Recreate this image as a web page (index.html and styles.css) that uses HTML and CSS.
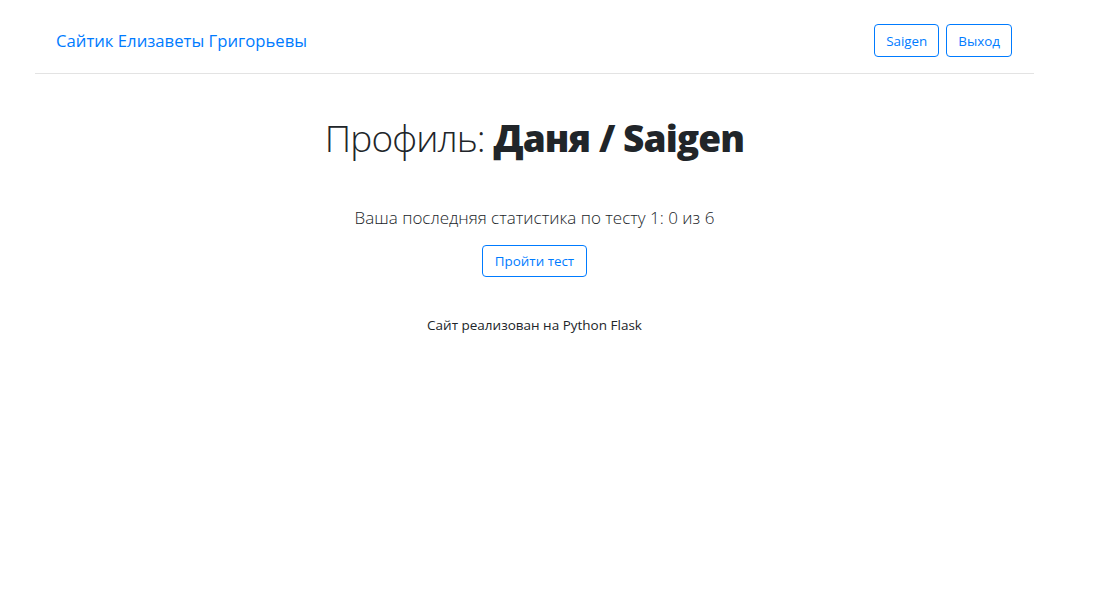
FILE: index.html
```html
<!DOCTYPE html>
<html lang="ru">
<head>
<meta charset="utf-8">
<title>Профиль</title>
<link rel="stylesheet" href="styles.css">
</head>
<body>
<div class="page">
  <div class="container">
    <header class="navbar">
      <a class="brand" href="#">Сайтик Елизаветы Григорьевы</a>
      <nav class="nav-buttons">
        <a class="btn" href="#">Saigen</a>
        <a class="btn" href="#">Выход</a>
      </nav>
    </header>
    <main class="content">
      <h1 class="title">Профиль: <b>Даня / Saigen</b></h1>
      <p class="stats">Ваша последняя статистика по тесту 1: 0 из 6</p>
      <a class="btn btn-wide" href="#">Пройти тест</a>
      <footer class="footer">Сайт реализован на Python Flask</footer>
    </main>
  </div>
</div>
</body>
</html>
```
FILE: styles.css
```css
* { box-sizing: border-box; }
html, body { margin: 0; background: #fff; }
body {
  font-family: "Open Sans", "Noto Sans", sans-serif;
  color: #212529;
}
.page {
  padding: 0 60px 0 35px;
}
.container {
  width: 999px;
}
.navbar {
  display: flex;
  align-items: center;
  justify-content: space-between;
  padding: 24px 22px 16px 21px;
  border-bottom: 1px solid #e3e3e3;
}
.brand {
  font-size: 16.7px;
  color: #007bff;
  text-decoration: none;
}
.nav-buttons {
  display: flex;
  gap: 7px;
}
.btn {
  display: inline-flex;
  align-items: center;
  justify-content: center;
  height: 33px;
  padding: 0 11px;
  border: 1px solid #007bff;
  border-radius: 4px;
  color: #007bff;
  font-size: 13.4px;
  text-decoration: none;
}
.btn-wide {
  padding: 0 11.5px;
  height: 32px;
}
.content {
  display: flex;
  flex-direction: column;
  align-items: center;
  padding-top: 42px;
}
.title {
  margin: 0;
  font-size: 37px;
  font-weight: 300;
  line-height: 1.2;
  letter-spacing: -0.9px;
}
.title b { font-weight: 800; }
.stats {
  margin: 46px 0 16px;
  font-size: 17px;
  font-weight: 300;
}
.footer {
  margin-top: 39px;
  font-size: 13.5px;
}
```
